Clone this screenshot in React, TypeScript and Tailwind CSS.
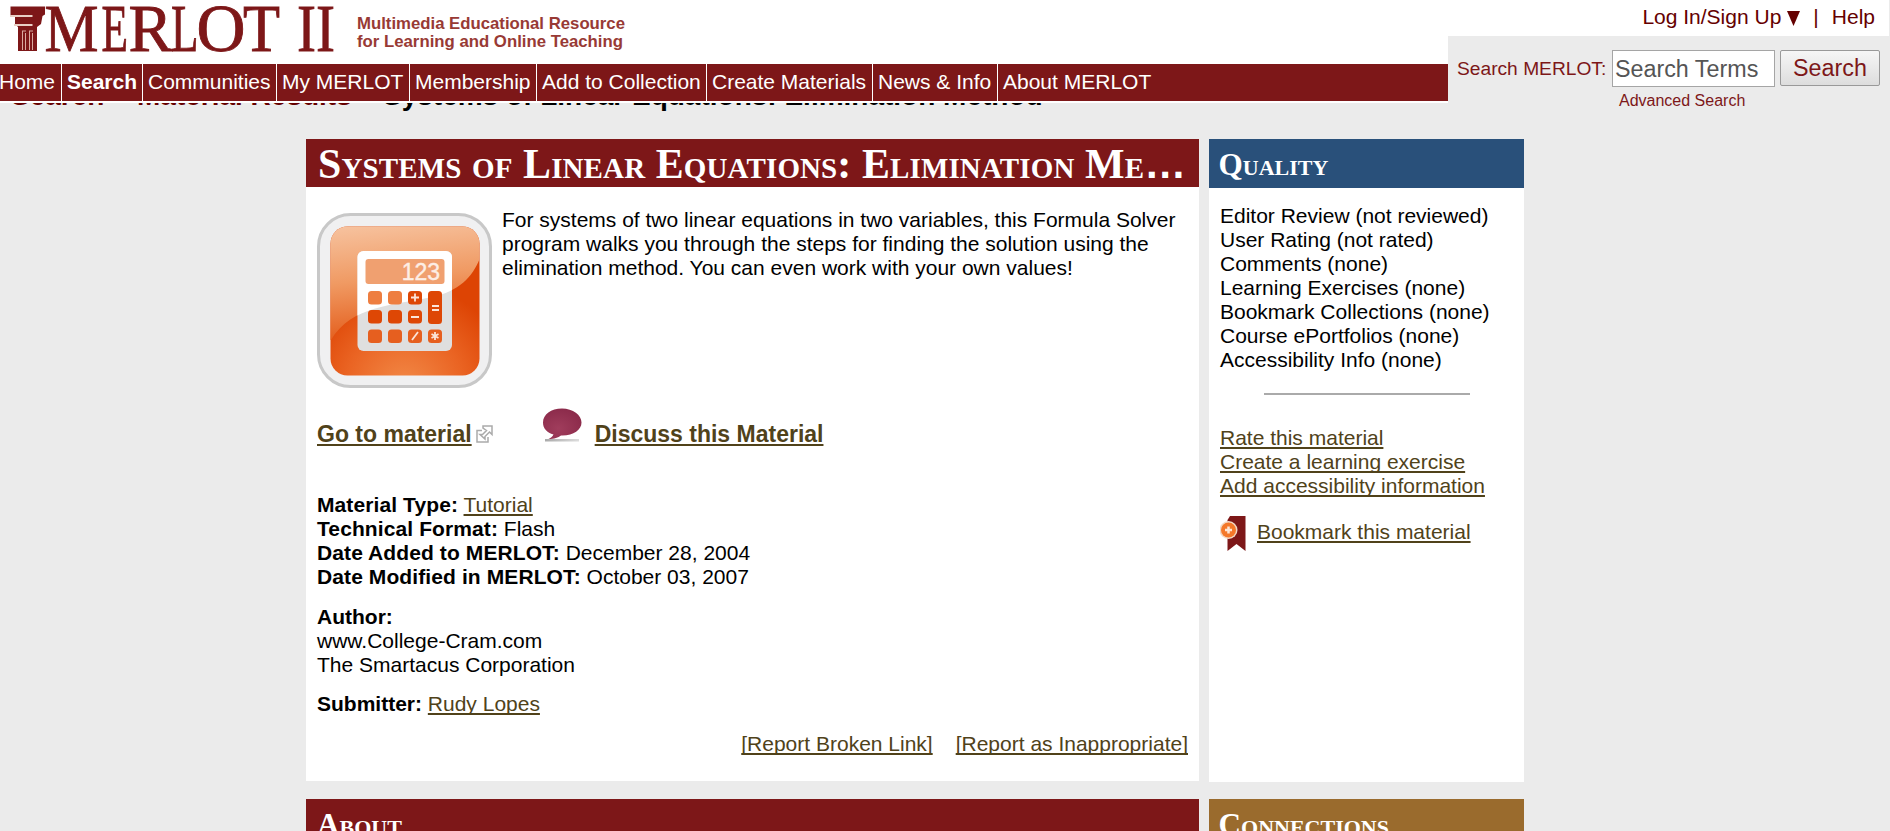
import React from 'react';

const nav = [
  { label: 'Home', style: 'w-[62px] border-r -indent-px' },
  { label: 'Search', style: 'w-[81px] border-r pl-[5px] font-bold' },
  { label: 'Communities', style: 'w-[134px] border-r pl-[5px]' },
  { label: 'My MERLOT', style: 'w-[133px] border-r pl-[5px]' },
  { label: 'Membership', style: 'w-[127px] border-r pl-[5px]' },
  { label: 'Add to Collection', style: 'w-[170px] border-r pl-[5px]' },
  { label: 'Create Materials', style: 'w-[166px] border-r pl-[5px]' },
  { label: 'News & Info', style: 'w-[125px] border-r pl-[5px]' },
  { label: 'About MERLOT', style: 'pl-[5px]' },
];

const wordmark: [string, number, number][] = [
  ['M', 44.5, 54], ['E', 101.5, 26.5], ['R', 128.5, 44], ['L', 171, 27.5],
  ['O', 196.5, 49], ['T', 243, 37], ['I', 297, 19], ['I', 316, 19],
];

const quality = ['Editor Review (not reviewed)', 'User Rating (not rated)', 'Comments (none)', 'Learning Exercises (none)', 'Bookmark Collections (none)', 'Course ePortfolios (none)', 'Accessibility Info (none)'];

function Link({ children, className = '' }: { children: React.ReactNode; className?: string }) {
  return (
    <a href="#" className={`text-[#50421a] underline decoration-2 underline-offset-2 [text-decoration-skip-ink:none] ${className}`}>
      {children}
    </a>
  );
}

function Label({ children }: { children: React.ReactNode }) {
  return <b className="tracking-[0.1px]">{children}</b>;
}

function Logo() {
  return (
    <svg width="640" height="64" viewBox="0 0 640 64" fill="#7d1718">
      <path d="M10.500 6.500H45v8l-2.500 1.500-1.500 8-4 3v24H18V27l-3-3v-7l-4.500-2z" />
      <path d="M10 16h22.500M14 25h18.500" stroke="#e9cfc5" strokeWidth="2" />
      <path d="M22 31h4M29 31h4M22.500 31v19M25.500 33v17M29.500 31v19M32.500 33v17" stroke="#d9aaa0" strokeWidth="1" />
      <text fontFamily="Liberation Serif" fontSize="67.500" stroke="#7d1718" strokeWidth="0.900">
        {wordmark.map(([ch, x, w], i) => (
          <tspan key={i} x={x} y="51.300" textLength={w} lengthAdjust="spacingAndGlyphs">{ch}</tspan>
        ))}
      </text>
      <g fontFamily="Liberation Sans" fontWeight="bold" fontSize="17" fill="#983a35">
        <text x="357" y="29" textLength="268" lengthAdjust="spacingAndGlyphs">Multimedia Educational Resource</text>
        <text x="357" y="46.500" textLength="266" lengthAdjust="spacingAndGlyphs">for Learning and Online Teaching</text>
      </g>
    </svg>
  );
}

function Calculator() {
  const xs = [51, 71, 91, 111];
  const ys = [78, 97, 116.5];
  return (
    <svg width="175" height="175" viewBox="0 0 175 175" className="shrink-0">
      <defs>
        <linearGradient id="gloss" x1="0.1" y1="0" x2="0.2" y2="1">
          <stop offset="0" stopColor="#f8ccad" />
          <stop offset="0.4" stopColor="#f09a63" />
          <stop offset="0.75" stopColor="#e35a18" />
        </linearGradient>
        <radialGradient id="base" cx="0.5" cy="1" r="0.75">
          <stop offset="0" stopColor="#f28a48" />
          <stop offset="0.45" stopColor="#ea6423" />
          <stop offset="0.8" stopColor="#dd4404" />
        </radialGradient>
        <clipPath id="face"><rect x="13.500" y="13.500" width="149" height="149" rx="17" /></clipPath>
        <clipPath id="upper"><path d="M0 0H175V45H163C155 65 142 78 115 84C75 93 35 92 14 127H0z" /></clipPath>
      </defs>
      <rect x="1.500" y="1.500" width="172" height="172" rx="32" fill="#f0f0f1" stroke="#c8c8c8" strokeWidth="3" />
      <g clipPath="url(#face)">
        <rect width="175" height="175" fill="url(#base)" />
        <rect width="175" height="175" fill="url(#gloss)" clipPath="url(#upper)" />
      </g>
      <rect x="40.500" y="38" width="94.500" height="100" rx="6" fill="#dfdfdf" />
      <rect x="40.500" y="38" width="94.500" height="100" rx="6" fill="#fff" clipPath="url(#upper)" />
      <rect x="48.500" y="46" width="79" height="25" rx="3" fill="#f0a070" />
      <text x="123" y="67" textAnchor="end" fontFamily="Liberation Sans" fontSize="23" fill="#fdeee5" stroke="#fdeee5" strokeWidth="0.400">123</text>
      {ys.map((y, r) => xs.map((x, c) => (r < 2 && c === 3) ? null : (
        <rect key={`${x}-${y}`} x={x} y={y} width="14" height="13.500" rx="3.500" fill={r === 0 && c < 2 ? '#ee7e40' : r === 2 ? '#e65f1f' : '#de4705'} />
      )))}
      <rect x="111" y="78" width="14" height="33" rx="3.500" fill="#de4705" />
      <path d="M98 80.500v8M94 84.500h8M94 104h8M115 93h7M115 97h7M95 127l6-8M118 119v8M114.500 121l7 4M121.500 121l-7 4" stroke="#fbe4d8" strokeWidth="1.800" />
    </svg>
  );
}

export default function App() {
  return (
    <div className="h-[831px] overflow-hidden bg-[#ebebeb] font-['Liberation_Sans',sans-serif] text-[21px] leading-[24px] text-black">
      <header className="relative z-10 flex h-[103px] w-[1889px]">
        <div className="flex w-[1448px] flex-col bg-white">
          <div className="h-16"><Logo /></div>
          <nav className="flex h-[37px] bg-[#7d1718] leading-[35px] whitespace-nowrap text-white">
            {nav.map((n) => (
              <a key={n.label} href="#" className={`block h-full shrink-0 border-white ${n.style}`}>{n.label}</a>
            ))}
          </nav>
        </div>
        <div className="flex w-[441px] flex-col">
          <div className="flex h-9 shrink-0 items-center justify-end bg-white pr-[14px] pb-[2px] text-[#650000]">
            <span>Log In/Sign Up</span>
            <svg width="13" height="15" className="mt-[3px] ml-[6px]"><path d="M0 0h13L6.500 15z" fill="#650000" /></svg>
            <span className="ml-[13px]">|</span>
            <span className="ml-[13px]">Help</span>
          </div>
          <div className="flex pt-[14px] pl-[9px] text-[#7d1718]">
            <span className="w-[155px] shrink-0 pt-[7px] text-[19.200px] whitespace-nowrap">Search MERLOT:</span>
            <div className="flex h-[37px] w-[163px] shrink-0 items-center border border-[#a5a5a5] bg-white pl-[2px] text-[23.300px] whitespace-nowrap text-[#555]">Search Terms</div>
            <button className="ml-[5px] flex h-9 w-[100px] items-center justify-center rounded-[2px] border border-[#999] bg-linear-to-b from-[#f6f6f6] to-[#dddddd] text-[23.300px]">Search</button>
          </div>
          <div className="shrink-0 pl-[171px] text-[16px] leading-[28px] text-[#7d1718]">Advanced Search</div>
        </div>
      </header>
      <div className="-mt-[22px] flex h-[58px] pl-[11px] text-[28px] leading-[30px] font-bold whitespace-nowrap">
        <span className="w-[126px] text-[#650000]">Search</span>
        <span className="w-[246px] text-[#650000]">Material Results</span>
        <span>Systems of Linear Equations: Elimination Method</span>
      </div>
      <main className="flex items-start gap-[10px] pl-[306px]">
        <div className="flex w-[893px] flex-col">
          <section className="h-[642px] bg-white">
            <h1 className="h-12 bg-[#7d1718] pl-[12px] font-['Liberation_Serif',serif] text-[41.900px] leading-[50px] font-bold tracking-[0.12px] whitespace-nowrap text-white [font-variant:small-caps]">Systems of Linear Equations: Elimination Me<span className="font-['Liberation_Sans',sans-serif] leading-none">…</span></h1>
            <div className="px-[11px]">
              <div className="flex h-[201px] gap-[10px] pt-[26px]">
                <Calculator />
                <p className="-mt-[5px]">For systems of two linear equations in two variables, this Formula Solver program walks you through the steps for finding the solution using the elimination method. You can even work with your own values!</p>
              </div>
              <div className="flex h-[105px] items-start pt-[20px] text-[23px] font-bold whitespace-nowrap">
                <Link className="pt-[14px]">Go to material</Link>
                <svg width="17" height="18" viewBox="0 0 17 18" fill="none" stroke="#aaa" strokeWidth="1.500" className="mt-[17px] ml-[4px]">
                  <path d="M6 5.500H1v11.500h11v-5M7 1h9v8.500l-2.500-2.500-4.500 4.500v2.500L4 9.500h2.500l4-4L7 3z" />
                </svg>
                <svg width="40" height="36" viewBox="0 0 40 36" className="ml-[49px]">
                  <defs>
                    <radialGradient id="bubble" cx="0.4" cy="0.65" r="0.65">
                      <stop offset="0" stopColor="#a03d5c" />
                      <stop offset="1" stopColor="#8c2b4b" />
                    </radialGradient>
                    <linearGradient id="shade"><stop offset="0" stopColor="#aaa" /><stop offset="1" stopColor="#ddd" /></linearGradient>
                  </defs>
                  <path d="M3 31h34v2.500H3z" fill="url(#shade)" />
                  <path d="M20 .5C9 .5 1 6.500 1 14.500c0 6 4 10 10.500 12-1 2-3 3.500-5 4.500 6 0 9.500-1.500 12.500-3.500C31 28 39.500 22 39.500 14.500S31 .5 20 .5z" fill="url(#bubble)" />
                </svg>
                <Link className="ml-[13px] pt-[14px]">Discuss this Material</Link>
              </div>
              <div><Label>Material Type:</Label> <Link>Tutorial</Link></div>
              <div><Label>Technical Format:</Label> Flash</div>
              <div><Label>Date Added to MERLOT:</Label> December 28, 2004</div>
              <div><Label>Date Modified in MERLOT:</Label> October 03, 2007</div>
              <div className="mt-4"><b>Author:</b></div>
              <div>www.College-Cram.com</div>
              <div>The Smartacus Corporation</div>
              <div className="mt-[15px]"><b>Submitter:</b> <Link>Rudy Lopes</Link></div>
              <div className="mt-4 flex justify-end gap-[23px]"><Link>[Report Broken Link]</Link><Link>[Report as Inappropriate]</Link></div>
            </div>
          </section>
          <section className="mt-[18px] h-12 bg-[#7d1718] pl-[11px] font-['Liberation_Serif',serif] text-[31.200px] leading-[51px] font-bold text-white [font-variant:small-caps]">About</section>
        </div>
        <div className="flex w-[315px] flex-col">
          <section className="h-[643px] bg-white">
            <h2 className="h-[49px] bg-[#29507a] pl-[9.500px] font-['Liberation_Serif',serif] text-[31.200px] leading-[51px] font-bold text-white [font-variant:small-caps]">Quality</h2>
            <div className="px-[11px] pt-4">
              {quality.map((q) => <div key={q} className="whitespace-nowrap">{q}</div>)}
              <hr className="mt-[21px] ml-[44px] w-[206px] border-t-2 border-[#aaa]" />
              <div className="mt-[31px] flex flex-col items-start whitespace-nowrap">
                <Link>Rate this material</Link><Link>Create a learning exercise</Link><Link>Add accessibility information</Link>
              </div>
              <div className="mt-[18px] flex whitespace-nowrap">
                <svg width="26" height="36" viewBox="0 0 26 36">
                  <path d="M10 0h15.500v35l-9-7-9 7V4z" fill="#7d1718" />
                  <circle cx="8.500" cy="14" r="9" fill="#f3d9c6" />
                  <circle cx="8.500" cy="14" r="7.500" fill="#f4782a" />
                  <path d="M8.500 10.500v7M5 14h7" stroke="#fde6d6" strokeWidth="2.500" />
                </svg>
                <Link className="ml-[11px] pt-1">Bookmark this material</Link>
              </div>
            </div>
          </section>
          <section className="mt-[17px] h-12 bg-[#9a6b2d] pl-[9.500px] font-['Liberation_Serif',serif] text-[31.200px] leading-[51px] font-bold text-white [font-variant:small-caps]">Connections</section>
        </div>
      </main>
    </div>
  );
}
